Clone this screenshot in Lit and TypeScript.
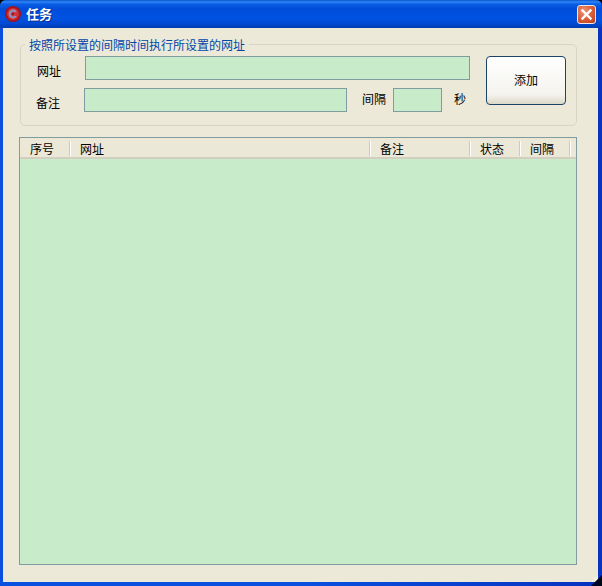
import { LitElement, html, css } from "lit";
import { customElement } from "lit/decorators.js";

@customElement("app-root")
export class AppRoot extends LitElement {
  static styles = css`
    :host { display: block; width: 602px; height: 586px; background: #000; font: 12px/16px "Noto Sans CJK SC", "Liberation Sans", sans-serif; color: #000; }
    .window { position: relative; width: 602px; height: 586px; box-sizing: border-box; display: flex; flex-direction: column; border-radius: 6px 6px 0 0; overflow: hidden;
      background: linear-gradient(90deg, #0a50e0 0, #0a50e0 50%, #0832c0 100%); }
    .title { height: 28px; flex: none; display: flex; align-items: center; padding: 0 6px 0 5px; gap: 4px;
      background: linear-gradient(180deg, #0a56cc 0, #2f86f8 2px, #0a5ee6 4px, #004cd8 9px, #0052e2 18px, #0048d2 24px, #003cb0 28px); }
    .title svg { flex: none; }
    .name { color: #fff; font-weight: 700; font-size: 13px; text-shadow: 1px 1px 0 #0a2f8a; margin-left: 1px; }
    .close { margin-left: auto; width: 19px; height: 19px; box-sizing: border-box; border: 1px solid #f4e8e0; border-radius: 3px; display: flex; align-items: center; justify-content: center;
      background: radial-gradient(circle at 35% 30%, #ec9478 0, #dc5f38 50%, #bc3c1c 100%); }
    .body { flex: 1; margin: 0 4px 4px 3px; background: #ece9d8; padding: 16px 0 0 0; min-height: 0; }
    .group { position: relative; margin-left: 17px; width: 557px; height: 82px; box-sizing: border-box; border: 1px solid #d8d5c6; border-radius: 5px; padding-top: 11px; display: flex; }
    .legend { position: absolute; left: 4px; top: -8px; padding: 0 4px; background: #ece9d8; color: #0046a8; }
    .fields { width: 449px; display: flex; flex-direction: column; gap: 8px; flex: none; }
    .row { display: flex; height: 24px; }
    .row1 { padding-left: 16px; gap: 24px; }
    .row2 { padding-left: 15px; }
    .label { flex: none; white-space: nowrap; }
    .low { padding-top: 7px; }
    .low2 { padding-top: 7px; }
    .mid { padding-top: 3px; }
    .input { flex: none; height: 24px; box-sizing: border-box; border: 1px solid #7f9ca0; background: #c8ecca; }
    .url { width: 385px; }
    .note { width: 263px; margin-left: 24px; }
    .gap-a { margin-left: 15px; }
    .interval { width: 49px; margin-left: 7px; }
    .gap-b { margin-left: 12px; }
    .add { flex: none; width: 80px; height: 49px; margin-left: 16px; box-sizing: border-box; border: 1px solid #1c4468; border-radius: 4px;
      background: linear-gradient(180deg, #fff 0, #f4f3ee 80%, #dcd8c8 100%); display: flex; align-items: center; justify-content: center; font: inherit; color: #000; padding: 0 0 2px; }
    .table { margin: 11px 0 0 16px; width: 558px; height: 428px; box-sizing: border-box; border: 1px solid #7f9ca0; background: #c8ecca; }
    .head { display: flex; height: 21px; box-sizing: border-box; background: #ebe8d8; border-bottom: 2px solid #d2cfc0; }
    .cell { box-sizing: border-box; padding-left: 10px; height: 16px; margin-top: 3px; line-height: 16px; position: relative; }
    .cell::after { content: ""; position: absolute; right: 0; top: 0; height: 15px; border-right: 1px solid #cdcabb; box-shadow: 1px 0 0 #fff; }
    .grip { position: absolute; right: 0; bottom: 0; }
  `;

  render() {
    const cols: [string, number][] = [["序号", 50], ["网址", 300], ["备注", 100], ["状态", 50], ["间隔", 50]];
    return html`
      <div class="window">
        <div class="title">
          <svg width="16" height="16" viewBox="0 0 16 16">
            <circle cx="8" cy="8" r="8" fill="#a8121c"/>
            <circle cx="8" cy="8" r="6" fill="#d03438"/>
            <path d="M10.8 6A3.4 3.4 0 1 0 10.8 10" fill="none" stroke="#8c96c4" stroke-width="2"/>
            <circle cx="8" cy="8" r="1" fill="#701820"/>
          </svg>
          <span class="name">任务</span>
          <div class="close">
            <svg width="13" height="13" viewBox="0 0 13 13"><path d="M2.5 2.5L10.5 10.5M10.5 2.5L2.5 10.5" stroke="#fff" stroke-width="2.4" stroke-linecap="square"/></svg>
          </div>
        </div>
        <div class="body">
          <div class="group">
            <span class="legend">按照所设置的间隔时间执行所设置的网址</span>
            <div class="fields">
              <div class="row row1">
                <span class="label low">网址</span>
                <div class="input url"></div>
              </div>
              <div class="row row2">
                <span class="label low2">备注</span>
                <div class="input note"></div>
                <span class="label mid gap-a">间隔</span>
                <div class="input interval"></div>
                <span class="label mid gap-b">秒</span>
              </div>
            </div>
            <button class="add">添加</button>
          </div>
          <div class="table">
            <div class="head">
              ${cols.map(([t, w]) => html`<div class="cell" style="width:${w}px">${t}</div>`)}
            </div>
          </div>
        </div>
        <svg class="grip" width="16" height="16" viewBox="0 0 16 16">
          <path d="M16 5V16H5Z" fill="#000820"/>
          <path d="M6 12L12 6" stroke="#fff" stroke-width="1" opacity=".7"/>
        </svg>
      </div>
    `;
  }
}
